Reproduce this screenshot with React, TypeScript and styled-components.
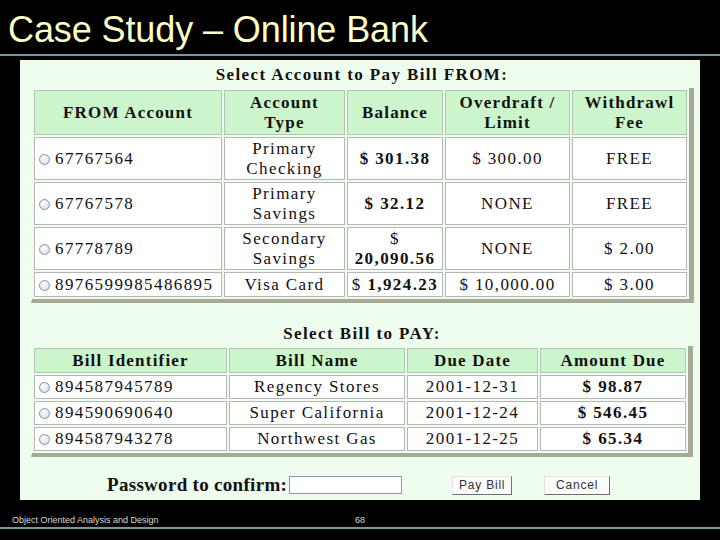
import styled, { createGlobalStyle } from "styled-components";
import type { ReactNode } from "react";

const GlobalStyle = createGlobalStyle`
  html, body {
    margin: 0;
    padding: 0;
    background: #000;
  }
  body {
    width: 720px;
    height: 540px;
    overflow: hidden;
    font-family: "Liberation Sans", Arial, sans-serif;
  }
`;

const serif = `"Liberation Serif", "Times New Roman", serif`;

const Slide = styled.div`
  width: 720px;
  height: 540px;
  display: flex;
  flex-direction: column;
  background: #000;
`;

const Title = styled.h1`
  margin: 0;
  padding: 10px 0 0 8px;
  height: 40px;
  font: 400 36px/40px "Liberation Sans", Arial, sans-serif;
  letter-spacing: -0.1px;
  color: #ffffc4;
  white-space: nowrap;
`;

const Rule = styled.div<{ $top: number }>`
  height: 2px;
  margin-top: ${(p) => p.$top}px;
  background: #6f9c9c;
`;

const Panel = styled.div`
  margin: 4px 0 0 20px;
  width: 680px;
  height: 440px;
  box-sizing: border-box;
  padding: 5px 0 0 11px;
  background: #effdef;
`;

const Column = styled.div`
  width: 662px;
  display: flex;
  flex-direction: column;
  font-family: ${serif};
  color: #111;
`;

const Heading = styled.div<{ $top: number; $bottom: number }>`
  margin: ${(p) => p.$top}px 0 ${(p) => p.$bottom}px;
  text-align: center;
  font-family: ${serif};
  font-size: 17px;
  line-height: 20px;
  font-weight: 700;
  letter-spacing: 1.4px;
  white-space: nowrap;
`;

const Table = styled.table`
  width: 662px;
  table-layout: fixed;
  border-collapse: separate;
  border-spacing: 2px;
  border-style: solid;
  border-width: 0 5px 4px 1px;
  border-color: #f6fff6 #a8aa98 #a8aa98 #f6fff6;
  background: #effdef;
  font-family: ${serif};
  font-size: 17px;
  color: #111;
`;

const Row = styled.tr<{ $h: number }>`
  height: ${(p) => p.$h}px;
`;

const HeadCell = styled.th`
  padding: 0;
  background: #ccf5cc;
  border: 1px solid #b4c4b4;
  font-family: ${serif};
  font-size: 17px;
  line-height: 20px;
  font-weight: 700;
  letter-spacing: 1.2px;
  text-align: center;
  vertical-align: middle;
  white-space: pre;
`;

const Cell = styled.td<{ $left?: boolean; $bold?: boolean }>`
  padding: 0 0 0 ${(p) => (p.$left ? 3 : 0)}px;
  background: #fff;
  border: 1px solid #b6b6b6;
  font-family: ${serif};
  font-size: 17px;
  line-height: 20px;
  font-weight: ${(p) => (p.$bold ? 700 : 400)};
  letter-spacing: 1.4px;
  text-align: ${(p) => (p.$left ? "left" : "center")};
  vertical-align: middle;
  white-space: pre;
  overflow: visible;
`;

const Radio = styled.span`
  display: inline-block;
  width: 9px;
  height: 9px;
  margin: 0 5px 0 1px;
  border: 1px solid #8c8e9e;
  border-radius: 50%;
  background: radial-gradient(circle at 40% 35%, #ffffff, #d2d6e0);
  vertical-align: -1px;
`;

const Regular = styled.span`
  font-weight: 400;
`;

const ConfirmRow = styled.div`
  margin-top: 18px;
  padding-left: 76px;
  height: 20px;
  display: flex;
  align-items: center;
`;

const Label = styled.span`
  font-family: ${serif};
  font-size: 19px;
  font-weight: 700;
  letter-spacing: 0.3px;
  white-space: nowrap;
`;

const Password = styled.input`
  width: 113px;
  height: 18px;
  margin-left: 2px;
  box-sizing: border-box;
  border: 1px solid #8a9aa8;
  background: #fff;
`;

const Button = styled.button<{ $w: number; $gap: number }>`
  width: ${(p) => p.$w}px;
  height: 19px;
  margin-left: ${(p) => p.$gap}px;
  padding: 0;
  box-sizing: border-box;
  background: #fbfbfb;
  border: 1px solid;
  border-color: #e2e2e2 #6e6e6e #6e6e6e #e2e2e2;
  font: 400 12px/17px "Liberation Sans", Arial, sans-serif;
  letter-spacing: 0.8px;
  color: #333;
`;

const Footer = styled.div`
  height: 40px;
  box-sizing: border-box;
  padding-top: 14px;
  display: flex;
  flex-direction: column;
`;

const FooterText = styled.div`
  display: flex;
  height: 12px;
  font: 400 9px/12px "Liberation Sans", Arial, sans-serif;
  color: #d8d8d8;
  white-space: nowrap;
`;

const FooterLeft = styled.span`
  width: 343px;
  padding-left: 12px;
`;

type Line = { cells: ReactNode[]; h: number; bold?: number[] };

const accounts: Line[] = [
  { cells: ["67767564", "Primary\nChecking", "$ 301.38", "$ 300.00", "FREE"], h: 43, bold: [2] },
  { cells: ["67767578", "Primary\nSavings", "$ 32.12", "NONE", "FREE"], h: 43, bold: [2] },
  {
    cells: ["67778789", "Secondary\nSavings", <><Regular>$</Regular>{"\n20,090.56"}</>, "NONE", "$ 2.00"],
    h: 43,
    bold: [2],
  },
  {
    cells: ["8976599985486895", "Visa Card", <><Regular>$ </Regular>1,924.23</>, "$ 10,000.00", "$ 3.00"],
    h: 25,
    bold: [2],
  },
];

const bills: Line[] = [
  { cells: ["894587945789", "Regency Stores", "2001-12-31", "$ 98.87"], h: 24, bold: [3] },
  { cells: ["894590690640", "Super California", "2001-12-24", "$ 546.45"], h: 24, bold: [3] },
  { cells: ["894587943278", "Northwest Gas", "2001-12-25", "$ 65.34"], h: 24, bold: [3] },
];

function DataTable({ cols, head, headH, lines }: { cols: number[]; head: string[]; headH: number; lines: Line[] }) {
  return (
    <Table>
      <colgroup>
        {cols.map((w, i) => (
          <col key={i} style={{ width: w }} />
        ))}
      </colgroup>
      <thead>
        <Row $h={headH}>
          {head.map((h) => (
            <HeadCell key={h}>{h}</HeadCell>
          ))}
        </Row>
      </thead>
      <tbody>
        {lines.map((line, r) => (
          <Row key={r} $h={line.h}>
            {line.cells.map((c, i) => (
              <Cell key={i} $left={i === 0} $bold={line.bold?.includes(i)}>
                {i === 0 ? (
                  <>
                    <Radio />
                    {c}
                  </>
                ) : (
                  c
                )}
              </Cell>
            ))}
          </Row>
        ))}
      </tbody>
    </Table>
  );
}

function App() {
  return (
    <Slide>
      <GlobalStyle />
      <Title>Case Study – Online Bank</Title>
      <Rule $top={4} />
      <Panel>
        <Column>
          <Heading $top={0} $bottom={3}>Select Account to Pay Bill FROM:</Heading>
          <DataTable
            cols={[188, 121, 96, 125, 115]}
            head={["FROM Account", "Account\nType", "Balance", "Overdraft /\nLimit", "Withdrawl\nFee"]}
            headH={45}
            lines={accounts}
          />
          <Heading $top={21} $bottom={2}>Select Bill to PAY:</Heading>
          <DataTable
            cols={[193, 176, 131, 146]}
            head={["Bill Identifier", "Bill Name", "Due Date", "Amount Due"]}
            headH={25}
            lines={bills}
          />
          <ConfirmRow>
            <Label>Password to confirm:</Label>
            <Password type="password" />
            <Button $w={60} $gap={50}>Pay Bill</Button>
            <Button $w={66} $gap={32}>Cancel</Button>
          </ConfirmRow>
        </Column>
      </Panel>
      <Footer>
        <FooterText>
          <FooterLeft>Object Oriented Analysis and Design</FooterLeft>
          <span>68</span>
        </FooterText>
        <Rule $top={1} />
      </Footer>
    </Slide>
  );
}

export default App;
